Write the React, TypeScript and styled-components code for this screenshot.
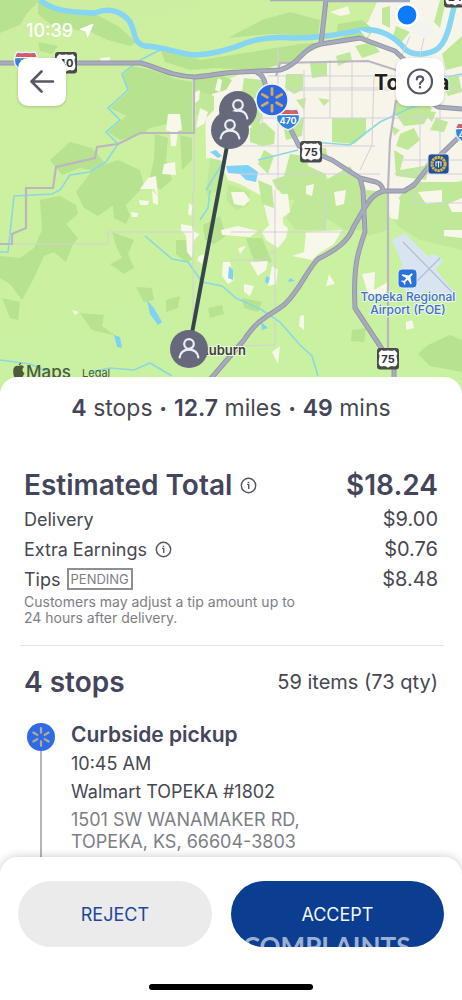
import React from 'react';
import styled, { createGlobalStyle } from 'styled-components';

const GlobalStyle = createGlobalStyle`
  * { box-sizing: border-box; }
  body {
    margin: 0;
    background: #ffffff;
    color: #46474f;
    font-family: Inter, "Liberation Sans", sans-serif;
  }
  h1, h2, h3, p, dl, dd, dt, ul { margin: 0; padding: 0; }
`;

const Screen = styled.div`
  min-height: 100vh;
  display: flex;
  flex-direction: column;
`;

const MapHeader = styled.header`
  position: relative;
  height: 393px;
  overflow: hidden;
`;

const MapCanvas = styled.svg`
  position: absolute;
  inset: 0;
  width: 100%;
  height: 100%;
  display: block;
`;

const MapOverlay = styled.div`
  position: relative;
  display: flex;
  flex-direction: column;
  gap: 18px;
  padding: 20px 18px;
`;

const StatusBar = styled.div`
  display: flex;
  align-items: center;
  gap: 6px;
  height: 20px;
  padding-left: 8px;
  color: #ffffff;
  font-size: 18px;
  font-weight: 500;
`;

const ControlRow = styled.div`
  display: flex;
  justify-content: space-between;
`;

const MapButton = styled.button`
  width: 48px;
  height: 48px;
  display: grid;
  place-items: center;
  padding: 0;
  border: 0;
  border-radius: 10px;
  background: #ffffff;
  color: #55566a;
  box-shadow: 0 1px 3px rgba(60, 80, 40, 0.25);
`;

const Sheet = styled.main`
  position: relative;
  flex: 1;
  display: flex;
  flex-direction: column;
  margin-top: -16px;
  padding: 16px 18px 0 24px;
  border-radius: 18px 18px 0 0;
  background: #ffffff;
`;

const Summary = styled.p`
  display: flex;
  justify-content: center;
  align-items: center;
  gap: 7px;
  padding-right: 6px;
  font-size: 23px;
  line-height: 30px;
  strong { font-weight: 600; color: #44455a; }
`;

const Bullet = styled.span`
  font-size: 13px;
`;

const Row = styled.div<{ $height: number }>`
  display: flex;
  align-items: center;
  justify-content: space-between;
  height: ${(p) => p.$height}px;
  padding-right: 6px;
`;

const Title = styled.h1`
  display: flex;
  align-items: center;
  gap: 8px;
  font-size: 28px;
  font-weight: 600;
  line-height: 36px;
  color: #44455a;
`;

const TotalAmount = styled.strong`
  font-size: 28px;
  font-weight: 600;
  color: #44455a;
`;

const Earnings = styled.section`
  margin-top: 43px;
  padding-bottom: 19px;
`;

const Label = styled.span`
  display: flex;
  align-items: center;
  gap: 8px;
  font-size: 18px;
`;

const Amount = styled.span`
  font-size: 20px;
`;

const Badge = styled.span`
  margin-left: -2px;
  height: 22px;
  padding: 0 2px;
  border: 2px solid #8e8f94;
  font-size: 13px;
  line-height: 18px;
  color: #7d7e84;
`;

const Note = styled.p`
  font-size: 14px;
  line-height: 16px;
  color: #7d7e84;
`;

const InfoButton = styled.button`
  display: grid;
  place-items: center;
  padding: 0;
  border: 0;
  background: none;
  color: #55565e;
`;

const Divider = styled.hr`
  align-self: stretch;
  height: 1px;
  margin: 0 0 0 -4px;
  border: 0;
  background: #e3e4e6;
`;

const StopsTitle = styled.h2`
  font-size: 28px;
  font-weight: 600;
  color: #44455a;
`;

const Timeline = styled.ul`
  flex: 1;
  display: flex;
  flex-direction: column;
  margin-top: 2px;
  list-style: none;
`;

const Stop = styled.li`
  flex: 1;
  display: flex;
  gap: 13px;
`;

const Rail = styled.div`
  display: flex;
  flex-direction: column;
  align-items: center;
  width: 34px;
  padding-top: 3px;
  &::after {
    content: "";
    flex: 1;
    width: 2px;
    background: #b4b5b9;
  }
`;

const StopBody = styled.div`
  display: flex;
  flex-direction: column;
  padding-bottom: 20px;
  font-size: 18px;
  line-height: 28px;
`;

const StopName = styled.h3`
  font-size: 21px;
  font-weight: 600;
  line-height: 30px;
  color: #44455a;
`;

const Address = styled.address`
  font-style: normal;
  line-height: 22px;
  padding-top: 3px;
  color: #7d7e84;
`;

const ActionBar = styled.footer`
  position: sticky;
  bottom: 0;
  display: flex;
  flex-direction: column;
  align-items: center;
  gap: 37px;
  margin-top: -16px;
  padding: 24px 18px 10px;
  border-radius: 18px 18px 0 0;
  background: #ffffff;
  box-shadow: 0 -1px 8px rgba(0, 0, 0, 0.18);
`;

const Actions = styled.div`
  display: flex;
  gap: 19px;
  width: 100%;
`;

const ActionButton = styled.button<{ $primary?: boolean }>`
  position: relative;
  flex: ${(p) => (p.$primary ? '11 1 0' : '10 1 0')};
  height: 66px;
  padding: 0;
  overflow: hidden;
  border: 0;
  border-radius: 33px;
  background: ${(p) => (p.$primary ? '#0b3d91' : '#ebebeb')};
  color: ${(p) => (p.$primary ? '#f2f5fb' : '#1d479a')};
  font-family: Inter, "Liberation Sans", sans-serif;
  font-size: 18px;
`;

const Watermark = styled.span`
  position: absolute;
  top: 49px;
  left: 12px;
  color: rgba(255, 255, 255, 0.62);
  font-family: Lato, sans-serif;
  font-size: 26px;
  font-weight: 700;
  line-height: 32px;
`;

const HomeIndicator = styled.div`
  width: 164px;
  height: 6px;
  border-radius: 3px;
  background: #000000;
`;

const InfoIcon = ({ size }: { size: number }) => (
  <svg width={size} height={size} viewBox="0 0 18 18" fill="none" stroke="currentColor" strokeWidth="1.5">
    <circle cx="9" cy="9" r="7.6" />
    <path d="M7.4 7.8H9.2V12.6M9 5V6.4" />
  </svg>
);

const Spark = ({ color, scale = 1 }: { color: string; scale?: number }) => (
  <g stroke={color} strokeWidth={2.6} strokeLinecap="round" transform={`scale(${scale})`}>
    {[0, 60, 120, 180, 240, 300].map((a) => (
      <path key={a} d="M0 -5V-10.4" transform={`rotate(${a})`} />
    ))}
  </g>
);

const PersonPin = ({ x, y, r = 19 }: { x: number; y: number; r?: number }) => (
  <g transform={`translate(${x} ${y})`}>
    <circle r={r} fill="#66687b" />
    <g fill="none" stroke="#eceef3" strokeWidth="2.2" strokeLinecap="round">
      <circle cy="-5" r="4.8" />
      <path d="M-9.4 8.5C-8.5 2.5 -4.5 0.6 0 0.6S8.5 2.5 9.4 8.5" />
    </g>
  </g>
);

const UsShield = ({ x, y, label }: { x: number; y: number; label: string }) => (
  <g transform={`translate(${x} ${y})`}>
    <rect x="-11" y="-11" width="22" height="21.5" rx="3" fill="#4a494c" />
    <path
      d="M-6.5 -9Q-3.5 -7.4 0 -8.8Q3.5 -7.4 6.5 -9L9.4 -6Q7.8 -3 9 0Q10 4 8.4 6.4Q6.5 8 4 7Q1.5 7 0 8.8Q-1.5 7 -4 7Q-6.5 8 -8.4 6.4Q-10 4 -9 0Q-7.8 -3 -9.4 -6Z"
      fill="#ffffff"
    />
    <text y="4" textAnchor="middle" fontSize="11" fontWeight="700" fill="#333338">
      {label}
    </text>
  </g>
);

const Interstate = ({ x, y, label }: { x: number; y: number; label: string }) => (
  <g transform={`translate(${x} ${y})`}>
    <path
      d="M-9 -10Q-4 -8.5 0 -10Q4 -8.5 9 -10Q13 -4 11 2Q8 8 0 11Q-8 8 -11 2Q-13 -4 -9 -10Z"
      fill="#3483dc"
      stroke="#e8eef4"
      strokeWidth="1.5"
    />
    <path d="M-8.6 -9Q-4 -7.5 0 -9Q4 -7.5 8.6 -9L10.4 -5H-10.4Z" fill="#dc5b5f" />
    <path d="M-11 -4.4H11" stroke="#ffffff" strokeWidth="1.2" />
    <text y="5" textAnchor="middle" fontSize="9" fontWeight="700" fill="#ffffff">
      {label}
    </text>
  </g>
);

const WOODS =
  'M0 0H40L28 12L20 25L0 33Z M38 0L60 12L95 14L118 26L136 42L130 46L108 40L90 32L62 28L50 24L38 14Z M38 42L58 46L52 54L40 51Z ' +
  'M132 66L152 70L176 79L192 82V132L168 133V124L150 128L142 134L120 140L108 132L126 116L110 108L128 92L122 76Z ' +
  'M160 48L200 60L226 56L300 44L330 42L350 34L372 32L368 38L325 44L290 62L258 70L215 68L190 70L165 62Z ' +
  'M228 38L262 20L290 12L320 20L318 36L270 34Z M338 24L362 20L372 28L350 31L336 36Z ' +
  'M155 134L168 138L166 160L172 180L160 190L150 178L154 158Z M180 135L192 138V160L182 170Z ' +
  'M50 160L70 142L92 148L104 162L100 172L80 168L62 175Z M94 168L118 160L140 170L144 186L126 205L112 206L98 216L84 208L76 192Z ' +
  'M40 200L60 196L76 205L78 214L66 224L78 238L72 246L66 262L54 252L44 256L34 278L22 300L10 284L0 278V256L20 258L34 248L42 230Z ' +
  'M112 196L124 200L130 216L126 224L114 218Z M112 232L134 240L128 254L134 268L124 274L110 264L122 258L116 246Z ' +
  'M2 298L20 302L18 320L10 318Z M80 313L104 315L102 326L116 336L92 330Z M136 287L152 288L154 300L144 302Z M166 300L180 296L178 308L166 312Z ' +
  'M176 240L188 240L192 260L186 262L176 254Z M208 308L222 305L224 314L210 318Z M352 330L366 328L364 342L351 341Z ' +
  'M428 345L450 335L462 340V372L430 366L418 354Z M242 298L262 302L258 312L244 308Z M246 238L262 238L272 262L256 266L250 250Z ' +
  'M203 225L220 216L226 236L214 244L205 240Z M194 76L218 74L232 80L226 90L212 94L204 112L196 106Z';

const URBAN_GREEN =
  'M244 78L262 80L264 96L250 100L242 92Z M236 92L250 96L262 116L258 128L242 124Z ' +
  'M286 74H303V90L294 94L285 88Z M310 63H327V76L312 78Z M336 56L350 52L352 60L338 66Z M355 46L372 42L380 52L362 58Z ' +
  'M250 128L264 122L275 132L274 144L262 146L250 142Z M282 118L304 118L302 136L286 140Z M332 118L366 118L366 134L354 144L332 142Z ' +
  'M398 86L432 108L424 124L404 126L394 112Z M436 118L448 122L444 132L430 130Z M420 110L436 112L432 122Z ' +
  'M400 134L414 128L420 140L408 150L396 146Z M392 126L400 130L394 136Z M308 148L326 148L328 158L312 160Z ' +
  'M290 154L306 156L308 166L326 174V190L314 198L290 200L276 188L272 180L284 176Z M326 180L350 166L358 180L364 200V230H345L326 218Z ' +
  'M300 190L326 190V230H296L286 218Z M394 150L404 156L400 170L424 166L432 154L426 180L396 176Z M366 190L388 192V230L368 236Z ' +
  'M400 196L412 182H462V250L420 240L398 226L390 214Z M442 54L462 36V66L446 70Z M440 80L458 74L462 92L448 96Z ' +
  'M264 150L274 156L268 174L258 164Z M318 98L330 100L324 106Z M296 100L306 98L304 110Z M382 8L390 6L390 28L382 24Z ' +
  'M196 90L214 96L214 110L206 118L196 114Z M210 158L226 162L220 190L206 196Z M228 184L250 192L248 206L236 210L226 200Z ' +
  'M258 180L272 186L274 208L262 204Z M396 26L410 32L400 44L392 40Z M440 0H446L440 28L434 22Z';

const FIELDS =
  'M168 114H180L182 130L178 131L176 146L171 146L170 132L166 130Z M164 164L175 162L176 175L162 174Z M148 178L156 176L158 196L154 189L140 189Z ' +
  'M195 92L200 90L199 100L194 104Z M200 108L208 112L204 124L196 128Z M218 78L222 80L220 92L215 90Z M100 58L110 57L110 61H101Z ' +
  'M139 200L149 201L148 205H140Z M152 190L158 196V205L153 203Z M131 212L138 213L137 217H132Z M189 203L193 206L191 216L188 214Z ' +
  'M181 224L192 226L194 232L200 234L194 240L192 258L187 252L186 236L181 230Z M199 256L205 254L202 264L197 260Z M72 310L79 312L75 315Z ' +
  'M221 230L238 226L258 231L250 237L222 235Z M223 262L230 262L234 280L228 284L222 276Z M231 192H244L250 200L244 206L234 204Z M273 194H288L290 212L282 218L276 208Z ' +
  'M268 226L280 222L288 228L286 238L278 248L266 240L262 232Z M306 232L342 230L334 244L318 254L312 260L292 256L304 252Z ' +
  'M250 262L268 261L266 270L258 276Z M244 284L254 286L250 296L244 292Z M238 248L246 246L240 254Z M272 266L278 270L276 284L268 286Z ' +
  'M329 274L335 284L326 286Z M362 274L375 272L374 290L388 282L386 294L368 294Z M418 192L442 190V202L426 204Z M444 230H462V238L444 236Z ' +
  'M300 316L304 315V330L299 326Z M272 352L280 346L278 364Z M406 322L412 320L414 328L406 330Z M334 192L346 190L344 204L336 206Z ' +
  'M392 194L400 200L398 220L390 218Z M448 204L462 198V212L452 212Z M306 186L314 184L312 196L306 194Z M330 12L348 6L350 14L340 16Z';

const LOCALS =
  'M262 70V140M278 46V190M304 70V146M330 60V118M352 60V118M374 76L372 145L360 170M420 60V190M440 60V168 ' +
  'M268 76H462M262 90H462M300 88H400M255 118H462M240 146H375M240 174H380M400 160H462M394 174H462M275 190V232H345M231 232H275V345L235 346 ' +
  'M194 80V190M193 190V330M0 244H108V232H192M325 190V230M231 260H262L275 250M414 190V203H462M410 36L402 55M424 38L420 56';

const HIGHWAYS =
  'M0 63H140C156 66 168 76 195 77C212 76 222 72 240 72L280 70C300 64 302 48 321 44L360 38L395 51L410 65L425 98L438 107L462 109 ' +
  'M326 0L321 44 M256 72Q264 74 266 88L290 128L299 146L332 160L360 178L376 182Q382 184 383 190 M360 178L363 190L365 232C358 252 353 265 355 308L384 352L394 364V393 ' +
  'M462 134L430 165L414 185L404 191H384C370 194 365 208 354 226C348 242 336 250 318 259C308 268 300 290 285 304C270 316 258 318 244 340L208 382';

const MapView = () => (
  <MapCanvas viewBox="0 0 462 393" preserveAspectRatio="xMidYMid slice" role="img" aria-label="Delivery route map">
    <defs>
      <linearGradient id="land" x1="0" y1="0" x2="0.3" y2="1">
        <stop offset="0" stopColor="#cdeea1" />
        <stop offset="0.5" stopColor="#cbf09f" />
        <stop offset="1" stopColor="#c9f1a2" />
      </linearGradient>
    </defs>
    <rect width="462" height="393" fill="url(#land)" />
    <path
      d="M205 90L240 74L262 70L290 62L325 44L346 40L368 22L378 0H462V180L440 190L410 205L395 200L388 220L370 196L352 186L340 190L326 176L300 174L280 186L284 232L276 240L268 222L262 196L240 184L228 180L220 160L206 158Z"
      fill="#f7f5ea"
    />
    <path d={WOODS} fill="#b7e290" />
    <path d={URBAN_GREEN} fill="#bfe998" />
    <path d={FIELDS} fill="#f7f7ea" />
    <path
      d="M392 240L404 233L428 256L434 254L443 260L436 270L458 296L448 304L426 290L412 300L400 282L402 264Z"
      fill="#d8e4ef"
    />
    <path d="M403 242L452 292M440 258L414 284" stroke="#b3bfd0" strokeWidth="1.2" />
    <g fill="#7fd2f3">
      <path d="M210 152L216 150L222 156L218 158Z M226 166L248 165L258 172L256 182L246 180L240 174L228 173Z M147 300L154 308L162 322L158 325L150 314Z M114 335L120 337L122 348L117 347Z M229 266L233 270V280L228 278Z M266 276L270 278L268 284L265 282Z M290 278L295 281L288 282Z M261 322L268 328L262 330Z" />
    </g>
    <g fill="none" stroke="#8ad8e2" strokeWidth="1.6">
      <path d="M160 50L148 56L137 62L122 74L128 90L108 108L120 120L106 132L118 144L106 162L90 172L70 175L60 190L52 194L14 196L8 252H0" />
      <path d="M145 236L172 259L188 262L202 282L222 286L236 298L262 310L280 322L300 345L312 356L318 376" />
      <path d="M0 360L30 364L50 372M90 372L110 368L134 370L150 363L172 376M210 190L208 208L200 220M222 164L206 190M258 160L298 150M312 142L350 145L380 122L410 108L430 102M440 78L462 74" />
    </g>
    <path
      d="M40 0C52 10 65 12 95 13C112 6 124 14 130 22C136 32 132 42 145 46C165 47 180 54 195 55C215 54 225 50 238 46C255 38 272 36 295 38C320 38 340 34 362 30C382 28 396 38 406 50C414 56 434 56 442 44C450 32 450 20 456 0"
      fill="none"
      stroke="#86d5f2"
      strokeWidth="5.5"
    />
    <path d="M410 24L430 22L436 34L424 38L410 32Z M360 30L370 34L366 38Z" fill="#f3f4f2" />
    <path d={LOCALS} fill="none" stroke="#d4cfdb" strokeWidth="1" />
    <path
      d="M194 78V133H140L118 144L97 147L95 158L56 167L53 188H26V228L12 234V244H0M276 76L280 63L368 61L396 70M388 190V358M388 190L390 140L396 100"
      fill="none"
      stroke="#bcb5c2"
      strokeWidth="2.2"
    />
    <path d={HIGHWAYS} fill="none" stroke="#9397a9" strokeWidth="5" strokeLinejoin="round" />
    <path d={HIGHWAYS} fill="none" stroke="#a8abbb" strokeWidth="3" strokeLinejoin="round" />
    <path d="M270 0H328M328 1H410" stroke="#a5a9ba" strokeWidth="2.5" />

    <g fontFamily="Inter, sans-serif">
      <text x="374" y="90" fontSize="21" fontWeight="700" fill="#1e1f20" stroke="#ffffff" strokeWidth="1.5" paintOrder="stroke">
        Topeka
      </text>
      <text x="246" y="355" textAnchor="end" fontSize="13" fontWeight="600" fill="#3c4038" stroke="#eef8e0" strokeWidth="2" paintOrder="stroke">
        Auburn
      </text>
      <g textAnchor="middle" fontSize="12" fontWeight="500" fill="#3e6fc2" stroke="#edf5ee" strokeWidth="2" paintOrder="stroke">
        <text x="408" y="301">Topeka Regional</text>
        <text x="408" y="314">Airport (FOE)</text>
      </g>
      <g fill="#4d5b3c">
        <path d="M18.8 365.2C19.8 365.2 21.2 364 21.2 362.8C19.8 363 18.6 364 18.8 365.2Z M13.2 371C13.2 367 15.8 364.8 18.8 366C20.8 364.8 23 365.4 24 367C21.8 368.6 22 371.6 24.5 373L22 378H14.8C13.6 376 13.2 373.5 13.2 371Z" />
        <text x="26" y="378" fontSize="17" fontWeight="500">Maps</text>
        <text x="82" y="377" fontSize="11">Legal</text>
      </g>
      <Interstate x={26} y={62} label="70" />
      <UsShield x={66} y={63} label="40" />
      <UsShield x={311} y={152} label="75" />
      <UsShield x={388} y={359} label="75" />
      <UsShield x={455} y={-3} label="24" />
      <Interstate x={288} y={119} label="470" />
      <Interstate x={467} y={133} label="470" />
    </g>

    <rect x="428" y="154" width="21" height="20" rx="3" fill="#24509a" stroke="#dfe6ee" strokeWidth="0.8" />
    <circle cx="438.5" cy="164" r="6.6" fill="#24509a" stroke="#d9b640" strokeWidth="3" strokeDasharray="2.4 0.6" />
    <path d="M436 161.5V166.5M441 161.5V166.5M436 162H441M438.5 161V167.5" stroke="#f0eed0" strokeWidth="1.1" />

    <rect x="398" y="269" width="19" height="19" rx="4" fill="#2c72db" stroke="#dfeaf5" strokeWidth="1" />
    <path
      d="M0 -7C1 -7 1.1 -5 1.1 -3L6.5 0.6V2L1.1 0.6L0.8 4L2.6 5.6V6.6L0 5.8L-2.6 6.6V5.6L-0.8 4L-1.1 0.6L-6.5 2V0.6L-1.1 -3C-1.1 -5 -1 -7 0 -7Z"
      fill="#ffffff"
      transform="translate(407.5 278.5) rotate(45)"
    />

    <circle cx="407" cy="15" r="10.6" fill="#0f7afa" stroke="#ffffff" strokeWidth="2.4" />
    <path d="M230 130L189 349" stroke="#36474b" strokeWidth="4" />
    <PersonPin x={238} y={110} />
    <PersonPin x={230} y={130} />
    <PersonPin x={189} y={349} />
    <g transform="translate(272 100)">
      <circle r="16" fill="#2d68e4" stroke="#f0f5fc" strokeWidth="1.4" />
      <Spark color="#dba952" scale={1.08} />
    </g>
  </MapCanvas>
);

const App = () => (
  <>
    <GlobalStyle />
    <Screen>
      <MapHeader>
        <MapView />
        <MapOverlay>
          <StatusBar>
            <span>10:39</span>
            <svg width="15" height="15" viewBox="0 0 15 15" fill="#ffffff">
              <path d="M14 1L8.6 14L7 8L1 6.4Z" stroke="#ffffff" strokeLinejoin="round" />
            </svg>
          </StatusBar>
          <ControlRow>
            <MapButton type="button" aria-label="Back">
              <svg width="26" height="26" viewBox="0 0 26 26" fill="none" stroke="currentColor" strokeWidth="2.6" strokeLinecap="round" strokeLinejoin="round">
                <path d="M24 12.5H3M12.5 2.5L2.5 12.5L12.5 22.5" />
              </svg>
            </MapButton>
            <MapButton type="button" aria-label="Help">
              <svg width="28" height="28" viewBox="0 0 28 28" fill="none" stroke="currentColor" strokeWidth="2.2" strokeLinecap="round">
                <circle cx="14" cy="13.5" r="12" />
                <path d="M10.8 11.4C10.8 7.4 17.2 7.4 17.2 11.2C17.2 13.6 14 13.6 14 16" />
                <path d="M14 19V19.2" strokeWidth="2.4" />
              </svg>
            </MapButton>
          </ControlRow>
        </MapOverlay>
      </MapHeader>

      <Sheet>
        <Summary>
          <span><strong>4</strong> stops</span>
          <Bullet>•</Bullet>
          <span><strong>12.7</strong> miles</span>
          <Bullet>•</Bullet>
          <span><strong>49</strong> mins</span>
        </Summary>

        <Earnings>
          <Row $height={38}>
            <Title>
              Estimated Total
              <InfoButton type="button" aria-label="About the estimated total">
                <InfoIcon size={17} />
              </InfoButton>
            </Title>
            <TotalAmount>$18.24</TotalAmount>
          </Row>
          <Row $height={30}>
            <Label>Delivery</Label>
            <Amount>$9.00</Amount>
          </Row>
          <Row $height={30}>
            <Label>
              Extra Earnings
              <InfoButton type="button" aria-label="About extra earnings">
                <InfoIcon size={17} />
              </InfoButton>
            </Label>
            <Amount>$0.76</Amount>
          </Row>
          <Row $height={30}>
            <Label>
              Tips <Badge>PENDING</Badge>
            </Label>
            <Amount>$8.48</Amount>
          </Row>
          <Note>
            Customers may adjust a tip amount up to
            <br />
            24 hours after delivery.
          </Note>
        </Earnings>

        <Divider />

        <Row $height={72}>
          <StopsTitle>4 stops</StopsTitle>
          <Amount>59 items (73 qty)</Amount>
        </Row>

        <Timeline>
          <Stop>
            <Rail>
              <svg width="28" height="28" viewBox="-14 -14 28 28">
                <circle r="14" fill="#2f6be6" />
                <Spark color="#b9ab8c" scale={0.85} />
              </svg>
            </Rail>
            <StopBody>
              <StopName>Curbside pickup</StopName>
              <time>10:45 AM</time>
              <span>Walmart TOPEKA #1802</span>
              <Address>
                1501 SW WANAMAKER RD,
                <br />
                TOPEKA, KS, 66604-3803
              </Address>
            </StopBody>
          </Stop>
        </Timeline>
      </Sheet>

      <ActionBar>
        <Actions>
          <ActionButton type="button">REJECT</ActionButton>
          <ActionButton type="button" $primary>
            ACCEPT
            <Watermark aria-hidden="true">COMPLAINTS</Watermark>
          </ActionButton>
        </Actions>
        <HomeIndicator />
      </ActionBar>
    </Screen>
  </>
);

export default App;
